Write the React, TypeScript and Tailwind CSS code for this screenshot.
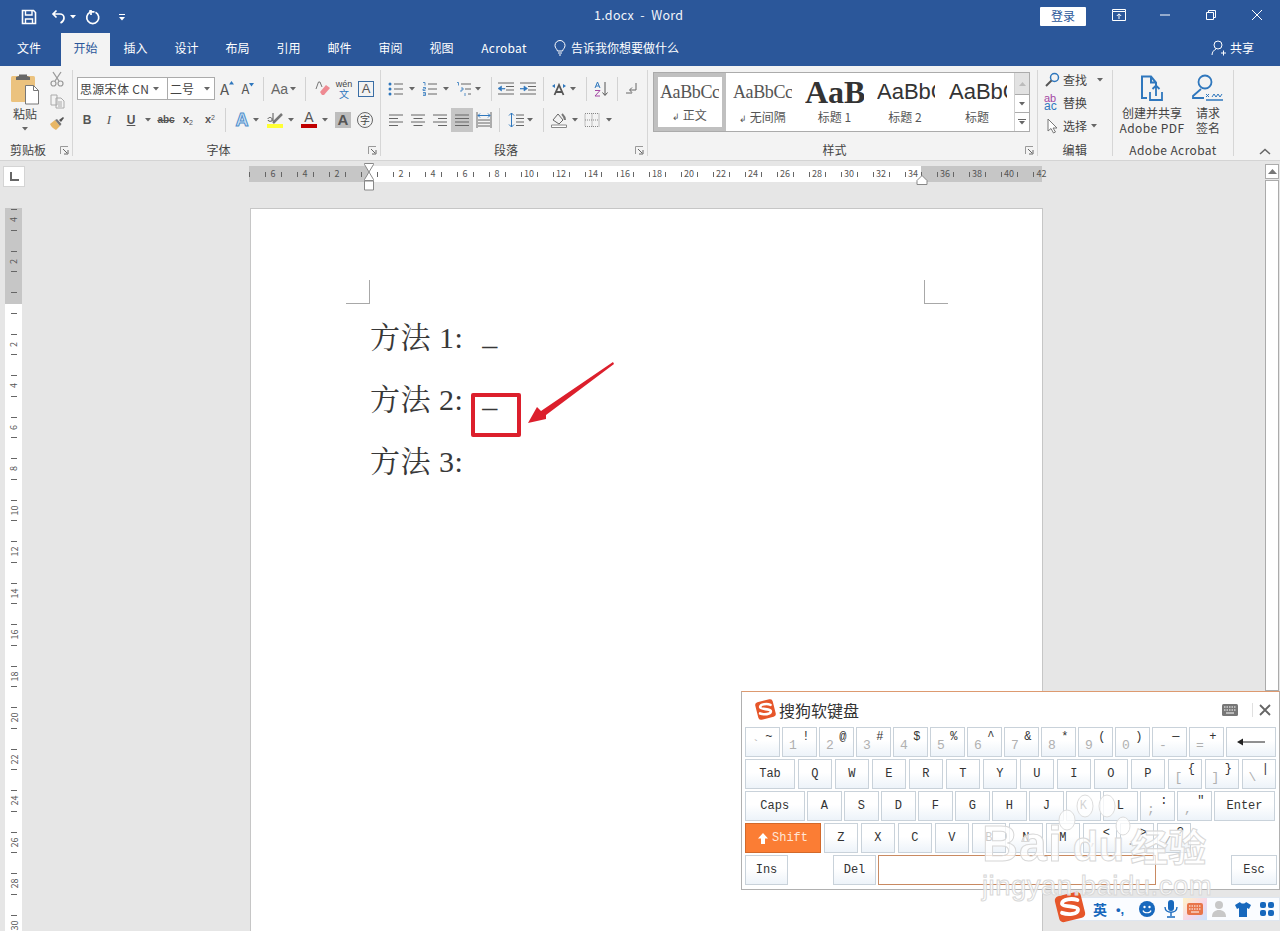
import React from "react";

type P = { className?: string };
type CP = P & { children?: React.ReactNode };

const Caret = ({ className = "" }: P) => (
  <svg width="8" height="4" viewBox="0 0 8 4" className={`shrink-0 ${className}`}><path d="M1 0h6L4 3.5z" fill="#666" /></svg>
);
const Sep = ({ className = "" }: P) => <div className={`w-px h-[24px] bg-[#d2d2d2] shrink-0 ${className}`} />;
const Launcher = () => (
  <svg width="9" height="9" viewBox="0 0 9 9" className="absolute right-[3px] top-[5px]">
    <path d="M.5 8V.5H8" stroke="#999" fill="none" /><path d="M3 3l4 4M8 4v4H4" stroke="#666" fill="none" />
  </svg>
);
const Lines = ({ d, className = "", w = 16 }: P & { d: string; w?: number }) => (
  <svg width={w} height="16" viewBox={`0 0 ${w} 16`} className={`shrink-0 ${className}`}><path d={d} stroke="#666" fill="none" /></svg>
);

function Bullets({ className = "" }: P) {
  return (
    <svg width="16" height="16" viewBox="0 0 16 16" className={`shrink-0 ${className}`}>
      <circle cx="2" cy="3" r="1.5" fill="#2f77bd" /><circle cx="2" cy="8" r="1.5" fill="#2f77bd" /><circle cx="2" cy="13" r="1.5" fill="#2f77bd" />
      <path d="M6 3h9M6 8h9M6 13h9" stroke="#666" />
    </svg>
  );
}
function Numbered({ className = "" }: P) {
  return (
    <svg width="16" height="16" viewBox="0 0 16 16" className={`shrink-0 ${className}`}>
      <path d="M1 1.5h2v3M1 6.5h2.5v1.5H1v1.5h2.5M1 11.5h2.5v3H1M1 13h2.5" stroke="#2f77bd" fill="none" strokeWidth=".8" />
      <path d="M6 3h9M6 8h9M6 13h9" stroke="#666" />
    </svg>
  );
}
function Multi({ className = "" }: P) {
  return (
    <svg width="16" height="16" viewBox="0 0 16 16" className={`shrink-0 ${className}`}>
      <path d="M1 1.5h1.5v3M5 7h2v2H5v2M9 12v3" stroke="#2f77bd" fill="none" strokeWidth=".8" />
      <path d="M5 3h10M9 8h6M12 13h3" stroke="#666" />
    </svg>
  );
}
function Indent({ className = "", flip = false }: P & { flip?: boolean }) {
  return (
    <svg width="16" height="16" viewBox="0 0 16 16" className={`shrink-0 ${className}`}>
      <path d="M0 2h16M8 5.5h8M8 9h8M0 13h16" stroke="#666" />
      <path d={flip ? "M0 7.5h4V5l3.5 2.5L4 10V8H0z" : "M7 7.5H3.5V5L0 7.5 3.5 10V8H7z"} fill="#2f77bd" stroke="#2f77bd" strokeWidth=".6" />
    </svg>
  );
}

function SogouLogo({ size, className = "" }: P & { size: number }) {
  return (
    <svg width={size} height={size} viewBox="0 0 32 32" className={`shrink-0 ${className}`}>
      <rect x="3.5" y="3.5" width="25" height="25" rx="4" fill="#e6562a" transform="rotate(-14 16 16)" />
      <path d="M23 9.5C18 7.5 9 8.5 8.5 12.5 8 16.5 23.5 14.5 23.5 18.5 23.5 23 14 23.5 8.5 21.5" fill="none" stroke="#fff" strokeWidth="3.6" strokeLinecap="round" />
    </svg>
  );
}

const rulerH = [6, 4, 2, 0, 2, 4, 6, 8, 10, 12, 14, 16, 18, 20, 22, 24, 26, 28, 30, 32, 34, 36, 38, 40, 42];
const rulerV = [4, 2, 0, 2, 4, 6, 8, 10, 12, 14, 16, 18, 20, 22, 24, 26, 28, 30];

function HRuler() {
  return (
    <div className="ml-[224px] w-[793px] h-[16px] flex items-center shrink-0 text-[#555] bg-[linear-gradient(to_right,#c6c6c6_120px,#fff_120px,#fff_672px,#c6c6c6_672px)]">
      <div className="w-px h-[5px] bg-[#666] mr-[7px] shrink-0" />
      {rulerH.map((n, i) => (
        <div key={i} className="w-[32px] flex justify-center shrink-0">
          <div className="w-[17px] flex items-center justify-between text-[9px] leading-[10px]">
            <span className="w-px h-[5px] bg-[#666]" />
            <span>{n === 0 ? "" : n}</span>
            {i === rulerH.length - 1 ? <span /> : <span className="w-px h-[5px] bg-[#666]" />}
          </div>
        </div>
      ))}
    </div>
  );
}

function VRuler() {
  return (
    <div className="ml-[5px] w-[17px] h-[723px] overflow-hidden shrink-0 bg-[linear-gradient(to_bottom,#c6c6c6_96px,#fff_96px)]">
      <div className="-mt-[9px] flex flex-col">
        {rulerV.map((n, i) => (
          <div key={i} className="h-[41.5px] flex items-center justify-center shrink-0">
            <div className="h-[21.5px] flex flex-col items-center justify-between text-[9px] leading-[9px] text-[#555]">
              <span className="w-[6px] h-px bg-[#666]" />
              <span className="-rotate-90">{n === 0 ? "" : n}</span>
              <span className="w-[6px] h-px bg-[#666]" />
            </div>
          </div>
        ))}
      </div>
    </div>
  );
}

function Group({ className = "", label, launcher, children }: CP & { label: string; launcher?: boolean }) {
  return (
    <div className={`flex flex-col h-full shrink-0 ${className}`}>
      <div className="h-[75px]">{children}</div>
      <div className={`relative h-[17px] flex items-center justify-center text-[12px] leading-[16px] text-[#444] ${launcher ? "pr-[16px]" : "tracking-[0.4px]"}`}>
        {label}
        {launcher && <Launcher />}
      </div>
    </div>
  );
}
const GroupSep = () => <div className="w-px h-[86px] bg-[#d6d6d6] shrink-0" />;

function TitleBar() {
  return (
    <div className="h-[33px] flex items-center shrink-0 text-white">
      <div className="w-[594px] flex items-center shrink-0">
        <svg width="16" height="16" viewBox="0 0 16 16" className="ml-[21px]"><path d="M1.5 1.5h11l2 2v11h-13z" fill="none" stroke="#fff" strokeWidth="1.6" /><path d="M4.5 2v4h6.5V2M4.5 14.5V10h7v4.5" fill="none" stroke="#fff" strokeWidth="1.4" /></svg>
        <svg width="16" height="16" viewBox="0 0 16 16" className="ml-[14px]"><path d="M5.5 1.5L2 5l3.5 3.5M2.5 5h6.5a4 4 0 0 1 4 4c0 2.5-1.5 4-3.5 5" fill="none" stroke="#fff" strokeWidth="1.7" /></svg>
        <svg width="6" height="4" viewBox="0 0 6 4" className="ml-[3px]"><path d="M0 0h6L3 3.5z" fill="#fff" /></svg>
        <svg width="16" height="16" viewBox="0 0 16 16" className="ml-[9px]"><path d="M5 3.2a6 6 0 1 0 5.5 0M6 1v5M4 2l5.5.8" fill="none" stroke="#fff" strokeWidth="1.7" /></svg>
        <svg width="8" height="8" viewBox="0 0 8 8" className="ml-[17px]"><path d="M1 1.5h6" stroke="#fff" /><path d="M1 4h6L4 7.5z" fill="#fff" /></svg>
      </div>
      <div className="w-[446px] pb-[3px] shrink-0 text-[12.5px] text-[#f2f5fa] whitespace-pre tracking-[0.3px]">1.docx  -  Word</div>
      <div className="w-[46px] h-[19px] mb-px bg-white rounded-[1px] flex items-center justify-center text-[12px] text-[#2b579a] shrink-0">登录</div>
      <svg width="14" height="12" viewBox="0 0 14 12" className="ml-[26px] mb-[3px]"><path d="M.5 2.5v9h13v-9M.5.5h13v2H.5zM7 10V5M4.8 7L7 4.8 9.2 7" fill="none" stroke="#fff" /></svg>
      <svg width="10" height="10" viewBox="0 0 10 10" className="ml-[34px] mb-[3px]"><path d="M0 5h10" stroke="#fff" /></svg>
      <svg width="10" height="10" viewBox="0 0 10 10" className="ml-[36px] mb-[3px]"><path d="M.5 2.5h7v7h-7zM2.5 2.5v-2h7v7h-2" fill="none" stroke="#fff" /></svg>
      <svg width="12" height="12" viewBox="0 0 12 12" className="ml-[35px] mb-[3px]"><path d="M1 1l10 10M11 1L1 11" stroke="#fff" /></svg>
    </div>
  );
}

function TabRow() {
  const tabs = ["插入", "设计", "布局", "引用", "邮件", "审阅", "视图"];
  return (
    <div className="h-[33px] flex shrink-0 text-[12px] text-white">
      <div className="w-[61px] pl-[17px] pb-[3px] flex items-center shrink-0">文件</div>
      <div className="w-[49px] bg-[#f3f3f3] text-[#2b579a] pb-[3px] flex items-center justify-center shrink-0">开始</div>
      {tabs.map((t) => (
        <div key={t} className="w-[51px] pb-[3px] flex items-center justify-center shrink-0">{t}</div>
      ))}
      <div className="w-[60px] ml-[7px] pb-[3px] flex items-center justify-center shrink-0 tracking-[0.3px]">Acrobat</div>
      <div className="flex items-center pb-[3px] ml-[20px] shrink-0">
        <svg width="12" height="16" viewBox="0 0 12 16"><path d="M3.5 11C3 9 1 8 1 5.5a5 5 0 0 1 10 0C11 8 9 9 8.500 11zM4 13h4M5 15h2" fill="none" stroke="#fff" /></svg>
        <span className="ml-[5px]">告诉我你想要做什么</span>
      </div>
      <div className="ml-[532px] flex items-center pb-[3px] shrink-0">
        <svg width="16" height="16" viewBox="0 0 16 16"><circle cx="7" cy="5" r="4" fill="none" stroke="#fff" /><path d="M1 15c0-3 2-5 4-6M9 9.500M10 13h5M12.500 10.500v5" fill="none" stroke="#fff" /></svg>
        <span className="ml-[3px]">共享</span>
      </div>
    </div>
  );
}

function Ribbon() {
  return (
    <div className="h-[95px] bg-[#f3f3f3] border-b border-[#d4d4d4] flex items-center shrink-0 text-[#444]">
      <Group className="w-[72px]" label="剪贴板" launcher>
        <div className="flex h-full">
          <div className="w-[50px] flex flex-col items-center shrink-0">
            <svg width="30" height="32" viewBox="0 0 30 32" className="mt-[7px]">
              <rect x="1" y="3" width="24" height="26" rx="1.500" fill="#ebc27e" />
              <path d="M6 4l3-1V1.500h8V3l3 1v3H6z" fill="#666" />
              <path d="M15.500 12.500h8l5 5v13.500h-13z" fill="#fff" stroke="#777" />
              <path d="M23.500 12.500v5h5" fill="none" stroke="#777" />
            </svg>
            <div className="text-[12px] leading-[16px] mt-[1px]">粘贴</div>
            <Caret className="mt-[5px]" />
          </div>
          <div className="w-[14px] flex flex-col items-center shrink-0 pt-[5px] gap-[7px]">
            <svg width="14" height="16" viewBox="0 0 14 16"><path d="M3 1l6 9M11 1L5 10" stroke="#999" strokeWidth="1.300" /><circle cx="3.500" cy="12.500" r="2.500" fill="none" stroke="#999" strokeWidth="1.200" /><circle cx="10.500" cy="12.500" r="2.500" fill="none" stroke="#999" strokeWidth="1.200" /></svg>
            <svg width="15" height="15" viewBox="0 0 15 15"><path d="M1 1h6l0 10H1zM6 4h5l3 3v7H6z" fill="#f3f3f3" stroke="#aaa" /><path d="M8 8h4M8 10h4M8 12h4" stroke="#aaa" /></svg>
            <svg width="16" height="15" viewBox="0 0 16 15"><path d="M1 8l5-4 5 6-4 4C5 13 2 11 1 8z" fill="#e8b765" /><path d="M6 4l5 6 1.500-2L8 3z" fill="#777" /><path d="M10 4l4-3 1 1-3 4z" fill="#555" /></svg>
          </div>
        </div>
      </Group>
      <GroupSep />
      <Group className="w-[307px]" label="字体" launcher>
        <div className="pt-[11px] flex flex-col gap-[8px]">
          <div className="h-[23px] flex items-center">
            <div className="ml-[4px] w-[91px] h-[23px] bg-white border border-[#ababab] flex items-center pl-[2px] shrink-0 text-[12px] whitespace-nowrap tracking-[0.3px]">
              思源宋体 CN<Caret className="ml-[3px]" />
            </div>
            <div className="w-[47px] h-[23px] bg-white border border-l-0 border-[#ababab] flex items-center pl-[2px] shrink-0 text-[12px]">
              二号<Caret className="ml-[9px]" />
            </div>
            <div className="ml-[4px] w-[16px] flex items-start justify-center shrink-0 text-[15px] leading-[18px] text-[#555]">A<svg width="5" height="4" viewBox="0 0 5 4" className="mt-[1px]"><path d="M0 3.500L2.500 0 5 3.500z" fill="#2f77bd" /></svg></div>
            <div className="ml-[6px] w-[14px] flex items-end justify-center shrink-0 text-[13px] leading-[18px] text-[#555]">A<svg width="5" height="4" viewBox="0 0 5 4" className="mb-[11px]"><path d="M0 0h5L2.500 3.500z" fill="#2f77bd" /></svg></div>
            <Sep className="ml-[8px]" />
            <div className="ml-[7px] w-[16px] text-[14px] leading-[18px] text-[#666] shrink-0 font-['Liberation_Sans']">Aa</div>
            <Caret className="ml-[2px]" />
            <Sep className="ml-[8px]" />
            <svg width="16" height="16" viewBox="0 0 16 16" className="ml-[9px] shrink-0"><path d="M1 8L3.500 1H5l2 5" fill="none" stroke="#777" /><path d="M5 11l6-7 4 3-6 7H7z" fill="#ee8a92" /></svg>
            <div className="ml-[5px] w-[16px] flex flex-col items-center shrink-0 leading-[9px]">
              <span className="text-[9px] text-[#444] font-['Liberation_Sans']">wén</span>
              <span className="text-[10px] text-[#2f77bd]">文</span>
            </div>
            <div className="ml-[6px] w-[16px] h-[16px] border border-[#3a6ea5] flex items-center justify-center text-[13px] leading-none shrink-0 font-['Liberation_Sans'] text-[#555]">A</div>
          </div>
          <div className="h-[23px] flex items-center font-['Liberation_Sans'] text-[#555]">
            <div className="ml-[6px] w-[16px] text-center font-bold text-[12px] shrink-0">B</div>
            <div className="ml-[6px] w-[16px] text-center italic text-[13px] font-['Liberation_Serif'] shrink-0">I</div>
            <div className="ml-[6px] w-[16px] text-center font-bold underline text-[12px] shrink-0">U</div>
            <Caret className="ml-[5px]" />
            <div className="ml-[3px] w-[22px] text-center text-[10px] font-bold line-through shrink-0">abc</div>
            <div className="ml-[3px] w-[16px] text-center text-[11px] font-bold shrink-0">x<sub className="text-[7px] font-normal">2</sub></div>
            <div className="ml-[6px] w-[16px] text-center text-[11px] font-bold shrink-0">x<sup className="text-[7px] font-normal">2</sup></div>
            <Sep className="ml-[7px]" />
            <div className="ml-[8px] w-[16px] text-center text-[18px] leading-[20px] font-bold text-[#cfe3f5] [-webkit-text-stroke:1px_#4f8fcc] shrink-0">A</div>
            <Caret className="ml-[2px]" />
            <div className="ml-[7px] w-[16px] flex flex-col items-center shrink-0">
              <svg width="16" height="12" viewBox="0 0 16 12"><path d="M6 11L15 2" stroke="#777" strokeWidth="2.500" /><path d="M1 7c0-2 4-2 4 0v2c0 0-4 1-4-1M6 1v8" stroke="#555" fill="none" /></svg>
              <div className="w-[16px] h-[4px] bg-[#ffff33]" />
            </div>
            <Caret className="ml-[4px]" />
            <div className="ml-[6px] w-[16px] flex flex-col items-center shrink-0 text-[14px] leading-[13px] text-[#555]">A<div className="w-[16px] h-[4px] bg-[#c00000]" /></div>
            <Caret className="ml-[4px]" />
            <div className="ml-[6px] w-[16px] h-[16px] bg-[#bdbdbd] flex items-center justify-center text-[15px] font-bold leading-none text-[#555] shrink-0">A</div>
            <div className="ml-[6px] w-[16px] h-[16px] rounded-full border border-[#666] flex items-center justify-center text-[10px] leading-none text-[#444] shrink-0 font-['Noto_Sans_CJK_SC']">字</div>
          </div>
        </div>
      </Group>
      <GroupSep />
      <Group className="w-[266px]" label="段落" launcher>
        <div className="pt-[11px] flex flex-col gap-[8px]">
          <div className="h-[23px] flex items-center">
            <Bullets className="ml-[7px]" /><Caret className="ml-[4px]" />
            <Numbered className="ml-[6px]" /><Caret className="ml-[4px]" />
            <Multi className="ml-[6px]" /><Caret className="ml-[2px]" />
            <Sep className="ml-[9px]" />
            <Indent className="ml-[6px]" /><Indent className="ml-[6px]" flip />
            <Sep className="ml-[7px]" />
            <svg width="16" height="16" viewBox="0 0 16 16" className="ml-[7px] shrink-0"><path d="M3.500 14L8 4l4.500 10M5 11h6" fill="none" stroke="#555" strokeWidth="1.800" /><path d="M1 5l3-2v4zM15 5l-3-2v4z" fill="#2f77bd" /></svg>
            <Caret className="ml-[2px]" />
            <Sep className="ml-[9px]" />
            <svg width="14" height="16" viewBox="0 0 14 16" className="ml-[7px] shrink-0"><path d="M11 1v13M8.500 11.500L11 14.500l2.500-3" fill="none" stroke="#555" /><path d="M1 7l2.500-6L6 7M2 5h3" fill="none" stroke="#2f77bd" /><path d="M1 9.500h5L1 15h5" fill="none" stroke="#a347a3" /></svg>
            <Sep className="ml-[9px]" />
            <svg width="14" height="16" viewBox="0 0 14 16" className="ml-[7px] shrink-0"><path d="M11 2v7H5M7 6.500L4.500 9 7 11.500" fill="none" stroke="#666" /><path d="M1 12h6" stroke="#666" /></svg>
          </div>
          <div className="h-[23px] flex items-center">
            <Lines className="ml-[7px]" d="M1 3h14M1 6.500h9M1 10h14M1 13.500h9" />
            <Lines className="ml-[6px]" d="M1 3h14M3.500 6.500h9M1 10h14M3.500 13.500h9" />
            <Lines className="ml-[6px]" d="M1 3h14M6 6.500h9M1 10h14M6 13.500h9" />
            <div className="ml-[3px] w-[22px] h-[24px] bg-[#c6c6c6] flex items-center justify-center shrink-0"><Lines d="M1 3h14M1 6.500h14M1 10h14M1 13.500h14" /></div>
            <svg width="16" height="16" viewBox="0 0 16 16" className="ml-[3px] shrink-0"><path d="M1 0v16M15 0v16M2 8h12M2 11h12M2 14h12" stroke="#666" fill="none" /><path d="M2 3.500h12M4 1.500l-2 2 2 2M12 1.500l2 2-2 2" stroke="#2f77bd" fill="none" /></svg>
            <Sep className="ml-[7px]" />
            <svg width="16" height="16" viewBox="0 0 16 16" className="ml-[8px] shrink-0"><path d="M3.500 1v14M1 3.500L3.500 1 6 3.500M1 12.500L3.500 15 6 12.500" fill="none" stroke="#2f77bd" /><path d="M8 3h8M8 6.500h8M8 10h8M8 13.500h8" stroke="#666" /></svg>
            <Caret className="ml-[2px]" />
            <Sep className="ml-[9px]" />
            <svg width="16" height="16" viewBox="0 0 16 16" className="ml-[7px] shrink-0"><path d="M2 8l5-6 5 6-4 4z" fill="none" stroke="#666" /><path d="M11 2c2 2 3 4 3 6" stroke="#777" fill="none" strokeWidth="2" /><path d="M.5 13h15v2.500H.5z" fill="#fff" stroke="#888" /></svg>
            <Caret className="ml-[4px]" />
            <svg width="16" height="16" viewBox="0 0 16 16" className="ml-[5px] shrink-0"><path d="M1 1.500h14v13H1zM8 1.500v13M1 8h14" fill="none" stroke="#888" strokeDasharray="1 1" /></svg>
            <Caret className="ml-[5px]" />
          </div>
        </div>
      </Group>
      <GroupSep />
      <Group className="w-[389px]" label="样式" launcher>
        <div className="ml-[5px] mt-[6px] w-[377px] h-[60px] bg-white border border-[#ababab] flex">
          <div className="w-[72px] h-[58px] border-[4px] border-[#c0c0c0] flex flex-col items-start shrink-0 pl-[2px]">
            <div className="w-[59px] h-[30px] overflow-hidden whitespace-nowrap text-[18px] leading-[30px] text-[#555] font-['Liberation_Serif'] tracking-[-0.4px]">AaBbCc</div>
            <div className="w-[59px] text-center text-[12px] leading-[20px] text-[#555]"><span className="text-[9px]">↲</span> 正文</div>
          </div>
          <div className="w-[72px] h-[58px] flex flex-col items-start shrink-0 pl-[7px] pt-[4px]">
            <div className="w-[59px] h-[30px] overflow-hidden whitespace-nowrap text-[18px] leading-[30px] text-[#555] font-['Liberation_Serif'] tracking-[-0.4px]">AaBbCc</div>
            <div className="w-[59px] text-center text-[12px] leading-[20px] text-[#555]"><span className="text-[9px]">↲</span> 无间隔</div>
          </div>
          <div className="w-[72px] h-[58px] flex flex-col items-start shrink-0 pl-[7px] pt-[4px]">
            <div className="w-[59px] h-[30px] overflow-hidden whitespace-nowrap text-[32px] leading-[30px] font-bold text-[#333] font-['Liberation_Serif']">AaB</div>
            <div className="w-[59px] text-center text-[12px] leading-[20px] text-[#555]">标题 1</div>
          </div>
          <div className="w-[72px] h-[58px] flex flex-col items-start shrink-0 pl-[7px] pt-[4px]">
            <div className="w-[58px] h-[30px] overflow-hidden whitespace-nowrap text-[22px] leading-[30px] text-[#333] font-['Liberation_Sans']">AaBbCc</div>
            <div className="w-[56px] text-center text-[12px] leading-[20px] text-[#555]">标题 2</div>
          </div>
          <div className="w-[72px] h-[58px] flex flex-col items-start shrink-0 pl-[7px] pt-[4px]">
            <div className="w-[58px] h-[30px] overflow-hidden whitespace-nowrap text-[22px] leading-[30px] text-[#333] font-['Liberation_Sans']">AaBbCc</div>
            <div className="w-[56px] text-center text-[12px] leading-[20px] text-[#555]">标题</div>
          </div>
          <div className="w-[15px] flex flex-col shrink-0 border-l border-[#d0d0d0]">
            <div className="h-[21px] bg-[#e2e2e2] flex items-center justify-center"><svg width="7" height="4" viewBox="0 0 7 4"><path d="M0 4l3.500-4L7 4z" fill="#bbb" /></svg></div>
            <div className="h-[19px] border-y border-[#ababab] bg-white flex items-center justify-center"><Caret /></div>
            <div className="h-[18px] bg-white flex flex-col gap-[1px] items-center justify-center"><div className="w-[8px] h-px bg-[#666]" /><Caret /></div>
          </div>
        </div>
      </Group>
      <GroupSep />
      <Group className="w-[74px]" label="编辑">
        <div className="pt-[2px] flex flex-col text-[12px] tracking-normal">
          <div className="h-[23px] flex items-center">
            <svg width="15" height="15" viewBox="0 0 15 15" className="ml-[7px] shrink-0"><circle cx="9.500" cy="5.500" r="4" fill="none" stroke="#2f77bd" strokeWidth="1.500" /><path d="M6.500 8.500L1 14" stroke="#555" strokeWidth="2" /></svg>
            <span className="ml-[3px]">查找</span>
            <Caret className="ml-[9px]" />
          </div>
          <div className="h-[23px] flex items-center">
            <div className="ml-[6px] w-[16px] flex flex-col shrink-0 text-[11px] leading-[8px] font-['Liberation_Sans'] mt-[-2px]">
              <span className="text-[#a347a3]">ab</span>
              <span className="text-[#2f77bd] text-[12px]">ac</span>
            </div>
            <span className="ml-[3px]">替换</span>
          </div>
          <div className="h-[23px] flex items-center">
            <svg width="13" height="16" viewBox="0 0 13 16" className="ml-[9px] shrink-0"><path d="M1 1v12l3-2.500L6.500 15l2-1-2.500-4 4 0z" fill="#fff" stroke="#777" /></svg>
            <span className="ml-[3px]">选择</span>
            <Caret className="ml-[3px]" />
          </div>
        </div>
      </Group>
      <GroupSep />
      <Group className="w-[120px]" label="Adobe Acrobat">
        <div className="flex h-full text-[12px] leading-[15px] tracking-normal">
          <div className="w-[78px] flex flex-col items-center shrink-0">
            <div className="h-[39px] pt-[9px] shrink-0">
              <svg width="24" height="27" viewBox="0 0 24 27"><path d="M7 23H2V1.500h9l5 6v5M11 1.500v6h5" fill="none" stroke="#2f77bd" strokeWidth="2" /><path d="M10 17v8h12v-8M16 21v-10M12.500 14L16 10.500 19.500 14" fill="none" stroke="#2f77bd" strokeWidth="1.800" /></svg>
            </div>
            <div className="whitespace-nowrap">创建并共享</div>
            <div className="whitespace-nowrap tracking-[0.4px]">Adobe PDF</div>
          </div>
          <div className="w-[34px] flex flex-col items-center shrink-0">
            <div className="h-[39px] pt-[8px] shrink-0">
              <svg width="32" height="28" viewBox="0 0 32 28"><circle cx="13" cy="8" r="6.500" fill="none" stroke="#2f77bd" strokeWidth="1.800" /><path d="M9 15l-8 7v2h11" fill="none" stroke="#2f77bd" strokeWidth="1.800" /><path d="M14 20l3 3M17 20l-3 3M20 23l2-3 2 3 2-3 2 3 2-3" fill="none" stroke="#2f77bd" /><path d="M14 26h17" stroke="#2f77bd" strokeWidth="1.500" /></svg>
            </div>
            <div className="whitespace-nowrap">请求</div>
            <div className="whitespace-nowrap">签名</div>
          </div>
        </div>
      </Group>
      <GroupSep />
      <div className="flex-1 h-full flex items-end justify-end pr-[9px] pb-[5px]">
        <svg width="12" height="7" viewBox="0 0 12 7"><path d="M1 6l5-4.500L11 6" fill="none" stroke="#666" strokeWidth="1.500" /></svg>
      </div>
    </div>
  );
}

function Page() {
  const font = "font-['Liberation_Serif','Noto_Serif_CJK_SC','Noto_Sans_CJK_SC',serif]";
  return (
    <div className="ml-[228px] w-[793px] h-[723px] bg-white border border-b-0 border-[#c6c6c6] shrink-0">
      <div className="flex justify-between pl-[95px] pr-[94px] pt-[71px]">
        <div className="w-[24px] h-[24px] border-r border-b border-[#a8a8a8]" />
        <div className="w-[24px] h-[24px] border-l border-b border-[#a8a8a8]" />
      </div>
      <div className={`mt-[3px] pl-[119px] text-[30px] leading-[62px] text-[#383838] tracking-[0.5px] ${font}`}>
        <div className="whitespace-pre">方法 1:<span className="ml-[19px] inline-block -translate-y-[3px]">_</span></div>
        <div className="whitespace-pre">方法 2:<span className="ml-[19px] inline-block -translate-y-[3px]">_</span></div>
        <div className="whitespace-pre">方法 3:</div>
      </div>
    </div>
  );
}

const K = "h-[30px] border border-[#c9d2da] bg-[linear-gradient(to_bottom,#ffffff_45%,#edf3f9)] shrink-0 font-['Liberation_Mono'] text-[12px] text-[#333] flex items-center justify-center";

function Sym({ a, b }: { a: string; b: string }) {
  return (
    <div className={`w-[34.5px] !justify-between !items-stretch px-[6px] py-[2px] ${K}`}>
      <span className="self-end text-[13px] leading-[16px] text-[#b0b0b0]">{a}</span>
      <span className="self-start text-[12px] leading-[14px] text-[#333]">{b}</span>
    </div>
  );
}
const Let = ({ c }: { c: string }) => <div className={`w-[34.5px] ${K}`}>{c}</div>;

function Keyboard() {
  return (
    <div className="absolute left-[741px] top-[691px] w-[539px] h-[199px] bg-white border border-[#b0b0b0] border-t-[#dd9a70] overflow-hidden">
      <div className="h-[35px] flex items-center pl-[12px]">
        <SogouLogo size={23} />
        <span className="ml-[2px] text-[16px] text-[#333]">搜狗软键盘</span>
        <svg width="16" height="12" viewBox="0 0 16 12" className="ml-auto"><rect width="16" height="12" rx="1.500" fill="#777" /><path d="M2 3h12M2 6h12" stroke="#fff" strokeDasharray="1.500 1" /><path d="M4 9h8" stroke="#fff" /></svg>
        <div className="w-px h-[14px] bg-[#e0e0e0] ml-[14px]" />
        <svg width="12" height="12" viewBox="0 0 12 12" className="ml-[6px] mr-[8px]"><path d="M1 1l10 10M11 1L1 11" stroke="#666" strokeWidth="1.800" /></svg>
      </div>
      <div className="flex flex-col gap-[2px] pl-[3px]">
        <div className="flex gap-[2.500px]">
          {[["`", "~"], ["1", "!"], ["2", "@"], ["3", "#"], ["4", "$"], ["5", "%"], ["6", "^"], ["7", "&"], ["8", "*"], ["9", "("], ["0", ")"], ["-", "—"], ["=", "+"]].map(([a, b]) => <Sym key={a} a={a} b={b} />)}
          <div className={`w-[50px] ${K}`}><svg width="28" height="8" viewBox="0 0 28 8"><path d="M5 4h23" stroke="#222" /><path d="M0 4l6-3.500v7z" fill="#222" /></svg></div>
        </div>
        <div className="flex gap-[2.500px]">
          <div className={`w-[50px] ${K}`}>Tab</div>
          {"QWERTYUIOP".split("").map((c) => <Let key={c} c={c} />)}
          <Sym a="[" b="{" /><Sym a="]" b="}" /><Sym a="\" b="|" />
        </div>
        <div className="flex gap-[2.500px]">
          <div className={`w-[59.500px] ${K}`}>Caps</div>
          {"ASDFGHJKL".split("").map((c) => <Let key={c} c={c} />)}
          <Sym a=";" b=":" /><Sym a="," b="″" />
          <div className={`w-[61px] ${K}`}>Enter</div>
        </div>
        <div className="flex gap-[2.500px]">
          <div className="w-[76px] h-[30px] bg-[#fb7d34] border border-[#d2692b] shrink-0 font-['Liberation_Mono'] text-[12px] text-[#ffe6d6] flex items-center justify-center gap-[4px]">
            <svg width="10" height="11" viewBox="0 0 10 11"><path d="M5 0l5 5.500H7V11H3V5.500H0z" fill="#fff" /></svg>Shift
          </div>
          {"ZXCVBNM".split("").map((c) => <Let key={c} c={c} />)}
          <Sym a="," b="<" /><Sym a="." b=">" /><Sym a="/" b="?" />
        </div>
        <div className="flex">
          <div className={`w-[43px] ${K}`}>Ins</div>
          <div className={`ml-[45px] w-[43px] ${K}`}>Del</div>
          <div className="ml-[2px] w-[278px] h-[30px] bg-white border border-[#c98a62] shrink-0" />
          <div className={`ml-[75px] w-[46px] ${K}`}>Esc</div>
        </div>
      </div>
    </div>
  );
}

function StatusBar() {
  return (
    <>
      <div className="absolute left-[1063px] top-[897px] w-[217px] h-[24px] bg-[#fafcff] border border-[#dfe6ef] flex items-center pl-[29px]">
        <span className="w-[16px] text-[14px] leading-none font-bold text-[#1768bd]">英</span>
        <span className="ml-[7px] w-[14px] text-[13px] leading-none font-bold text-[#1768bd] font-['Liberation_Sans']">•,</span>
        <svg width="16" height="16" viewBox="0 0 16 16" className="ml-[9px]"><circle cx="8" cy="8" r="8" fill="#1768bd" /><circle cx="5.500" cy="6" r="1.200" fill="#fff" /><circle cx="10.500" cy="6" r="1.200" fill="#fff" /><path d="M4 9.500c1 3 7 3 8 0" stroke="#fff" fill="none" strokeWidth="1.200" /></svg>
        <svg width="14" height="18" viewBox="0 0 14 18" className="ml-[9px]"><rect x="4" width="6" height="11" rx="3" fill="#1768bd" /><path d="M1 7c0 7 12 7 12 0M7 13v3M3 17h8" stroke="#1768bd" fill="none" strokeWidth="1.400" /></svg>
        <div className="ml-[5px] w-[24px] h-[22px] flex items-center justify-center bg-[linear-gradient(135deg,#fff3c8,#f7d7e8_55%,#c8e4ff)]">
          <svg width="16" height="12" viewBox="0 0 16 12"><rect width="16" height="12" rx="2" fill="#e8754a" /><path d="M2 3h12M2 6h12" stroke="#fff" strokeDasharray="1.500 1" /><path d="M4 9h8" stroke="#fff" /></svg>
        </div>
        <svg width="14" height="16" viewBox="0 0 14 16" className="ml-[5px]"><circle cx="7" cy="4" r="4" fill="#c8c8c8" /><path d="M0 16c0-5 3-7 7-7s7 2 7 7z" fill="#c8c8c8" /></svg>
        <svg width="16" height="15" viewBox="0 0 16 15" className="ml-[9px]"><path d="M5 0L0 3l2 4 2-1v9h8V6l2 1 2-4-5-3c-1 2-5 2-6 0z" fill="#1768bd" /></svg>
        <svg width="14" height="14" viewBox="0 0 14 14" className="ml-[9px]"><rect width="6" height="6" rx="2" fill="#1768bd" /><rect x="8" width="6" height="6" rx="2" fill="#1768bd" /><rect y="8" width="6" height="6" rx="2" fill="#1768bd" /><rect x="8" y="8" width="6" height="6" rx="2" fill="#1768bd" /></svg>
      </div>
      <SogouLogo size={34} className="absolute left-[1053px] top-[890px]" />
    </>
  );
}

function Watermark() {
  const t = "text-white/75 [-webkit-text-stroke:1px_#d8d8d8] font-['Liberation_Sans','Noto_Sans_CJK_SC',sans-serif] font-bold whitespace-nowrap";
  return (
    <div className="absolute left-[982px] top-[793px] w-[230px] h-[108px] pointer-events-none">
      <svg width="80" height="50" viewBox="0 0 80 50" className="absolute left-[70px] top-0">
        <ellipse cx="15" cy="27" rx="8" ry="10" fill="#ffffffc8" stroke="#dddddd" />
        <ellipse cx="33" cy="13" rx="8" ry="11" fill="#ffffffc8" stroke="#dddddd" />
        <ellipse cx="55" cy="13" rx="8" ry="11" fill="#ffffffc8" stroke="#dddddd" />
        <ellipse cx="71" cy="33" rx="7" ry="9" fill="#ffffffc8" stroke="#dddddd" />
      </svg>
      <div className="absolute left-0 top-[26px] flex items-baseline">
        <span className={`text-[50px] leading-[50px] tracking-[1px] ${t}`}>Bai</span>
        <span className={`ml-[10px] text-[42px] leading-[50px] ${t}`}>du</span>
        <span className={`ml-[6px] text-[38px] leading-[50px] ${t}`}>经验</span>
      </div>
      <div className={`absolute left-0 top-[78px] text-[27.500px] leading-[30px] !font-normal tracking-[0.500px] ${t}`}>jingyan.baidu.com</div>
    </div>
  );
}

export default function App() {
  return (
    <div className="relative w-[1280px] h-[931px] overflow-hidden bg-[#e6e6e6] font-['Noto_Sans_CJK_SC','Liberation_Sans',sans-serif]">
      <div className="flex flex-col h-full">
        <div className="bg-[#2b579a]">
          <TitleBar />
          <TabRow />
        </div>
        <Ribbon />
        <div className="flex flex-1 min-h-0">
          <div className="w-[1264px] flex flex-col shrink-0">
            <div className="h-[47px] pt-[5px] flex items-start shrink-0">
              <div className="ml-[3px] w-[22px] h-[21px] bg-white border border-[#d4d4d4] flex items-center justify-center shrink-0">
                <svg width="9" height="9" viewBox="0 0 9 9"><path d="M1 0v8h8" fill="none" stroke="#666" strokeWidth="2" /></svg>
              </div>
              <HRuler />
            </div>
            <div className="flex flex-1 min-h-0">
              <VRuler />
              <Page />
            </div>
          </div>
          <div className="w-[14px] ml-px pt-[3px] flex flex-col shrink-0">
            <div className="h-[15px] bg-white border border-[#ababab] flex items-center justify-center"><svg width="9" height="5" viewBox="0 0 9 5"><path d="M0 5l4.500-5L9 5z" fill="#777" /></svg></div>
            <div className="h-[511px] mt-px bg-white border border-[#ababab]" />
          </div>
        </div>
      </div>

      <svg width="12" height="28" viewBox="0 0 12 28" className="absolute left-[363px] top-[163px]">
        <path d="M1.500.5h9v1L6 9 1.500 1.500zM6 9l4.500 7.500v1h-9v-1zM1.500 18h9v9h-9z" fill="#fff" stroke="#888" />
      </svg>
      <svg width="12" height="10" viewBox="0 0 12 10" className="absolute left-[916px] top-[175px]">
        <path d="M6 .5l5 5v4H1v-4z" fill="#fff" stroke="#888" />
      </svg>

      <div className="absolute left-[471px] top-[393px] w-[50px] h-[44px] border-[4px] border-[#dc1f2c] rounded-[2px]" />
      <svg width="92" height="66" viewBox="0 0 92 66" className="absolute left-[525px] top-[360px]">
        <path d="M3 63L12 47 16 51 88 2 89 4 21 55 21 59z" fill="#dc1f2c" />
      </svg>

      <Keyboard />
      <StatusBar />
      <Watermark />
    </div>
  );
}
